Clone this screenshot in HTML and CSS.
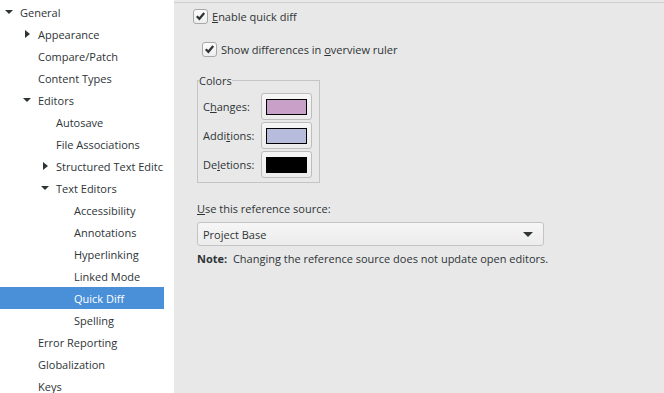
FILE: index.html
```html
<!DOCTYPE html>
<html lang="en">
<head>
  <meta charset="UTF-8" />
  <title>Preferences - Quick Diff</title>
  <link rel="stylesheet" href="styles.css">
</head>
<body>
  <div class="tree">
    <ul class="tree-list">
      <li class="row lvl0"><span class="tw open"></span>General</li>
      <li class="row lvl1"><span class="tw closed"></span>Appearance</li>
      <li class="row lvl1"><span class="tw"></span>Compare/Patch</li>
      <li class="row lvl1"><span class="tw"></span>Content Types</li>
      <li class="row lvl1"><span class="tw open"></span>Editors</li>
      <li class="row lvl2"><span class="tw"></span>Autosave</li>
      <li class="row lvl2"><span class="tw"></span>File Associations</li>
      <li class="row lvl2"><span class="tw closed"></span>Structured Text Editc</li>
      <li class="row lvl2"><span class="tw open"></span>Text Editors</li>
      <li class="row lvl3"><span class="tw"></span>Accessibility</li>
      <li class="row lvl3"><span class="tw"></span>Annotations</li>
      <li class="row lvl3"><span class="tw"></span>Hyperlinking</li>
      <li class="row lvl3"><span class="tw"></span>Linked Mode</li>
      <li class="row lvl3 selected"><span class="tw"></span>Quick Diff</li>
      <li class="row lvl3"><span class="tw"></span>Spelling</li>
      <li class="row lvl1"><span class="tw"></span>Error Reporting</li>
      <li class="row lvl1"><span class="tw"></span>Globalization</li>
      <li class="row lvl1"><span class="tw"></span>Keys</li>
    </ul>
  </div>

  <div class="content">
    <label class="check">
      <span class="box"><svg viewBox="0 0 14 14" width="14" height="14"><path d="M3 7.2 L5.8 10 L11 3.8" fill="none" stroke="#2e3436" stroke-width="2.4"/></svg></span>
      <span><u>E</u>nable quick diff</span>
    </label>

    <label class="check sub">
      <span class="box"><svg viewBox="0 0 14 14" width="14" height="14"><path d="M3 7.2 L5.8 10 L11 3.8" fill="none" stroke="#2e3436" stroke-width="2.4"/></svg></span>
      <span>Show differences in <u>o</u>verview ruler</span>
    </label>

    <fieldset class="colors">
      <legend>Colors</legend>
      <div class="color-row">
        <span class="color-label">C<u>h</u>anges:</span>
        <button class="swatch-btn"><span class="swatch changes"></span></button>
      </div>
      <div class="color-row">
        <span class="color-label">Addi<u>t</u>ions:</span>
        <button class="swatch-btn"><span class="swatch additions"></span></button>
      </div>
      <div class="color-row">
        <span class="color-label">De<u>l</u>etions:</span>
        <button class="swatch-btn"><span class="swatch deletions"></span></button>
      </div>
    </fieldset>

    <div class="source-label"><u>U</u>se this reference source:</div>
    <div class="combo">
      <span>Project Base</span>
      <span class="combo-arrow"></span>
    </div>
    <div class="note"><b>Note:</b>&nbsp; Changing the reference source does not update open editors.</div>
  </div>
</body>
</html>
```

FILE: styles.css
```css
* {
  box-sizing: border-box;
}

html, body {
  margin: 0;
  height: 100%;
}

body {
  display: flex;
  overflow: hidden;
  font-family: 'Open Sans', sans-serif;
  font-size: 11px;
  line-height: 15px;
  color: #2e3436;
  background: #e8e8e8;
}

/* left tree */
.tree {
  width: 174px;
  flex: none;
  background: #ffffff;
  padding-top: 1px;
}

.tree-list {
  list-style: none;
  margin: 0;
  padding: 0;
  width: 164px;
}

.row {
  height: 22px;
  display: flex;
  align-items: center;
  white-space: nowrap;
  overflow: hidden;
}

.row.selected {
  background: #4a90d9;
  color: #ffffff;
}

.lvl0 { padding-left: 2px; }
.lvl1 { padding-left: 20px; }
.lvl2 { padding-left: 38px; }
.lvl3 { padding-left: 56px; }

.tw {
  width: 18px;
  height: 22px;
  flex: none;
  position: relative;
}

.tw.open::before {
  content: "";
  position: absolute;
  left: 3px;
  top: 9px;
  border-left: 4px solid transparent;
  border-right: 4px solid transparent;
  border-top: 4px solid #2e3436;
}

.tw.closed::before {
  content: "";
  position: absolute;
  left: 5px;
  top: 7px;
  border-top: 4px solid transparent;
  border-bottom: 4px solid transparent;
  border-left: 5px solid #2e3436;
}

/* right page */
.content {
  flex: 1;
  margin-top: 2px;
  border-top: 1px solid #cfcfcf;
  padding: 4px 0 0 19px;
}

.check {
  display: flex;
  align-items: center;
  gap: 4px;
  height: 18px;
}

.check.sub {
  margin: 15px 0 0 9px;
}

.box {
  width: 15px;
  height: 15px;
  border: 1px solid #a8a8a8;
  border-radius: 3px;
  background: linear-gradient(#fcfcfc, #eeeeee);
  display: flex;
  align-items: center;
  justify-content: center;
}

.box svg {
  display: block;
}

.colors {
  margin: 15px 0 0 4px;
  width: 123px;
  border: 1px solid #c4c4c4;
  padding: 4px 7px 3px 5px;
}

.colors legend {
  padding: 0;
  margin-left: -4px;
}

.color-row {
  display: flex;
  align-items: center;
  justify-content: space-between;
  height: 29px;
}

.swatch-btn {
  width: 51px;
  height: 27px;
  border: 1px solid #bdbdbd;
  border-radius: 3px;
  background: linear-gradient(#f6f6f6, #ececec);
  padding: 0;
  display: flex;
  align-items: center;
  justify-content: center;
}

.swatch {
  width: 41px;
  height: 16px;
  border: 1px solid #000000;
}

.changes { background: #c8a0c8; }
.additions { background: #b8bcdc; }
.deletions { background: #000000; }

.source-label {
  margin: 18px 0 0 4px;
}

.combo {
  margin: 6px 0 0 4px;
  width: 347px;
  height: 24px;
  border: 1px solid #c4c4c4;
  border-radius: 3px;
  background: linear-gradient(#f6f6f6, #ececec);
  display: flex;
  align-items: center;
  justify-content: space-between;
  padding: 0 10px 0 5px;
}

.combo-arrow {
  border-left: 5px solid transparent;
  border-right: 5px solid transparent;
  border-top: 5px solid #2e3436;
}

.note {
  margin: 5px 0 0 4px;
}
```
